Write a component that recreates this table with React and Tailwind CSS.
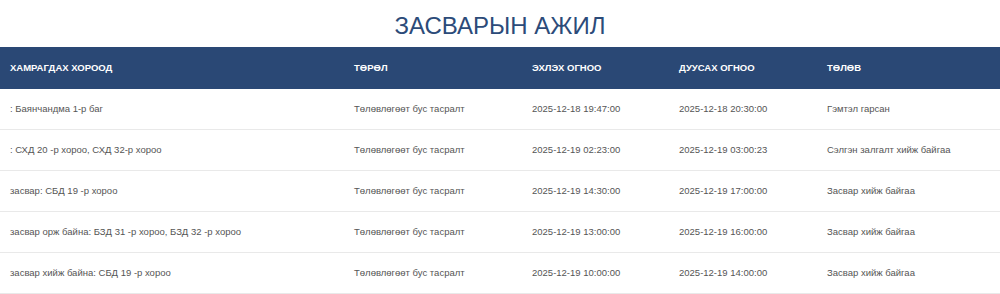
const rows = [
  [": Баянчандма 1-р баг", "Төлөвлөгөөт бус тасралт", "2025-12-18 19:47:00", "2025-12-18 20:30:00", "Гэмтэл гарсан"],
  [": СХД 20 -р хороо, СХД 32-р хороо", "Төлөвлөгөөт бус тасралт", "2025-12-19 02:23:00", "2025-12-19 03:00:23", "Сэлгэн залгалт хийж байгаа"],
  ["засвар: СБД 19 -р хороо", "Төлөвлөгөөт бус тасралт", "2025-12-19 14:30:00", "2025-12-19 17:00:00", "Засвар хийж байгаа"],
  ["засвар орж байна: БЗД 31 -р хороо, БЗД 32 -р хороо", "Төлөвлөгөөт бус тасралт", "2025-12-19 13:00:00", "2025-12-19 16:00:00", "Засвар хийж байгаа"],
  ["засвар хийж байна: СБД 19 -р хороо", "Төлөвлөгөөт бус тасралт", "2025-12-19 10:00:00", "2025-12-19 14:00:00", "Засвар хийж байгаа"],
];

const headers = ["Хамрагдах хороод", "Төрөл", "Эхлэх огноо", "Дуусах огноо", "Төлөв"];

export default function App() {
  return (
    <div className="w-[1000px] h-[294px] overflow-hidden bg-white font-['Liberation_Sans',Arial,sans-serif]">
      {/* Гарчиг */}
      <h1 className="h-[47px] flex items-center justify-center pt-[4px] text-[24px] text-[#2c4b79] uppercase">
        Засварын ажил
      </h1>

      <div className="grid grid-cols-[344px_178px_147px_148px_1fr] h-[42px] items-center bg-[#2a4875] text-white text-[9.5px] font-bold uppercase">
        {headers.map((h) => (
          <div key={h} className="pl-[10px]">{h}</div>
        ))}
      </div>

      {rows.map((r, i) => (
        <div
          key={i}
          className="grid grid-cols-[344px_178px_147px_148px_1fr] h-[41px] items-center border-b border-[#e9e9e9] text-[9.5px] text-[#555]"
        >
          {r.map((c, j) => (
            <div key={j} className="pl-[10px]">{c}</div>
          ))}
        </div>
      ))}
    </div>
  );
}
